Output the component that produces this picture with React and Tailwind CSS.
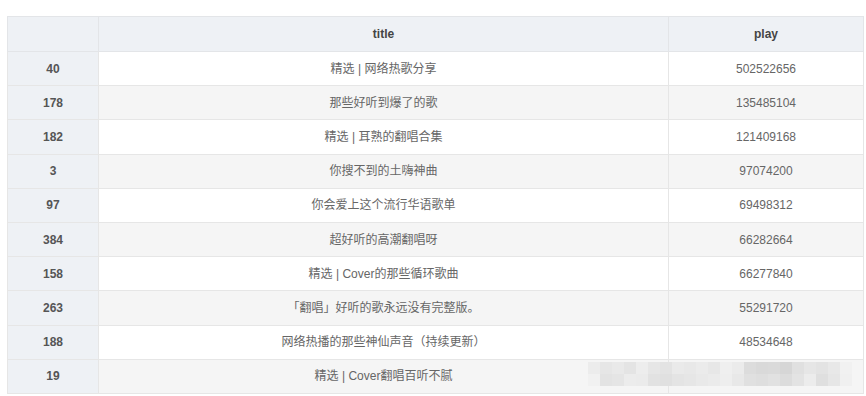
import React from "react";

const rows = [
  ["40", "精选 | 网络热歌分享", "502522656"],
  ["178", "那些好听到爆了的歌", "135485104"],
  ["182", "精选 | 耳熟的翻唱合集", "121409168"],
  ["3", "你搜不到的土嗨神曲", "97074200"],
  ["97", "你会爱上这个流行华语歌单", "69498312"],
  ["384", "超好听的高潮翻唱呀", "66282664"],
  ["158", "精选 | Cover的那些循环歌曲", "66277840"],
  ["263", "「翻唱」好听的歌永远没有完整版。", "55291720"],
  ["188", "网络热播的那些神仙声音（持续更新）", "48534648"],
  ["19", "精选 | Cover翻唱百听不腻", ""],
];

const mosaic = [
  ["#ececec", "#e6e6e6", "#e9e9e9", "#e4e4e4", "#ededed", "#e6e6e6", "#e3e3e3", "#eaeaea", "#e8e8e8", "#ebebeb", "#e7e7e7", "#efefef", "#ebebeb", "#dcdcdc", "#d9d9d9", "#dadada", "#d6d6d6", "#e0e0e0", "#e6e6e6", "#e3e3e3", "#e8e8e8", "#f1f1f1"],
  ["#f1f1f1", "#e3e3e3", "#e5e5e5", "#ececec", "#ebebeb", "#e2e2e2", "#e0e0e0", "#e4e4e4", "#e6e6e6", "#e9e9e9", "#ebebeb", "#eeeeee", "#e8e8e8", "#e0e0e0", "#dedede", "#e1e1e1", "#dcdcdc", "#e3e3e3", "#ececec", "#dfdfdf", "#e6e6e6", "#f0f0f0"],
];

export default function App() {
  return (
    <div
      className="h-[396px] w-[866px] overflow-hidden bg-white pl-[7px] pt-[16px]"
      style={{ fontFamily: '"Liberation Sans", "Noto Sans CJK SC", sans-serif' }}
    >
      <div className="relative w-[856px]">
        <table className="w-[856px] table-fixed border-collapse text-[12px]">
          <colgroup>
            <col className="w-[91px]" />
            <col className="w-[570px]" />
            <col className="w-[195px]" />
          </colgroup>
          <thead>
            <tr className="h-[35px] bg-[#eef1f5]">
              <th className="border border-[#e3e5e8]"></th>
              <th className="border border-[#e3e5e8] font-bold text-[#444]">title</th>
              <th className="border border-[#e3e5e8] font-bold text-[#444]">play</th>
            </tr>
          </thead>
          <tbody>
            {rows.map((r, i) => (
              <tr key={r[0]} className={i % 2 === 0 ? "h-[34.2px] bg-white" : "h-[34.2px] bg-[#f5f5f5]"}>
                <td className="border border-[#e6e6e6] bg-[#eef1f5] text-center font-bold text-[#555]">{r[0]}</td>
                <td className="border border-[#e6e6e6] text-center text-[#666]">{r[1]}</td>
                <td className="border border-[#e6e6e6] text-center text-[#666]">{r[2]}</td>
              </tr>
            ))}
          </tbody>
        </table>
        <div className="absolute left-[581px] top-[346px] flex flex-col">
          {mosaic.map((line, j) => (
            <div key={j} className="flex">
              {line.map((c, k) => (
                <div key={k} className="h-[12px] w-[12px]" style={{ backgroundColor: c }} />
              ))}
            </div>
          ))}
        </div>
      </div>
    </div>
  );
}
